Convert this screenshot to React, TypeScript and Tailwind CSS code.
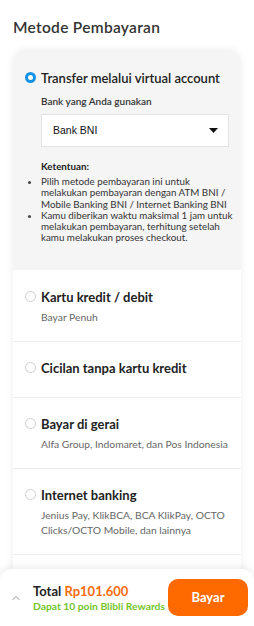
import { ChevronUp } from 'lucide-react';

const otherMethods = [
  { title: 'Kartu kredit / debit', desc: 'Bayar Penuh' },
  { title: 'Cicilan tanpa kartu kredit', desc: '' },
  { title: 'Bayar di gerai', desc: 'Alfa Group, Indomaret, dan Pos Indonesia' },
  {
    title: 'Internet banking',
    desc: 'Jenius Pay, KlikBCA, BCA KlikPay, OCTO Clicks/OCTO Mobile, dan lainnya',
  },
];

const terms = [
  ['Pilih metode pembayaran ini untuk', 'melakukan pembayaran dengan ATM BNI /', 'Mobile Banking BNI / Internet Banking BNI'],
  ['Kamu diberikan waktu maksimal 1 jam untuk', 'melakukan pembayaran, terhitung setelah', 'kamu melakukan proses checkout.'],
];

const Radio = ({ checked }: { checked?: boolean }) =>
  checked ? (
    <span className="mt-[1px] block h-[11px] w-[11px] shrink-0 rounded-full border-[3px] border-[#1592e6] bg-white" />
  ) : (
    <span className="mt-[1px] block h-[11px] w-[11px] shrink-0 rounded-full border border-[#cfcfcf] bg-white" />
  );

export default function App() {
  return (
    <div className="relative h-[626px] w-[254px] overflow-hidden bg-white font-['Lato',sans-serif] text-[#333]">
      <h1 className="px-[13px] pt-[17px] text-[15.5px] font-semibold leading-[20px] tracking-[0.3px] text-[#333]">
        Metode Pembayaran
      </h1>

      <div className="mx-[13px] mt-[13px] overflow-hidden rounded-t-[12px] shadow-[0_0_8px_rgba(0,0,0,0.07)]">
        {/* Selected method */}
        <div className="bg-[#f5f5f5] px-[12px] pb-[26px] pt-[21px]">
          <div className="flex items-start gap-[5px]">
            <Radio checked />
            <span className="text-[13px] font-semibold leading-[14px] text-[#222]">
              Transfer melalui virtual account
            </span>
          </div>
          <div className="pl-[16px]">
            <p className="mt-[10px] text-[10px] font-semibold leading-[12px] text-[#333]">
              Bank yang Anda gunakan
            </p>
            <div className="mt-[7px] flex h-[33px] items-center justify-between border border-[#e3e3e3] bg-white pl-[11px] pr-[10px]">
              <span className="font-['Liberation_Sans',sans-serif] text-[10.5px] text-[#111]">Bank BNI</span>
              <svg width="9" height="5" viewBox="0 0 9 5">
                <path d="M0 0h9L4.5 5z" fill="#111" />
              </svg>
            </div>
            <p className="mt-[13px] text-[9.8px] font-bold leading-[12px] text-[#222]">Ketentuan:</p>
          </div>
          <ul className="mt-[4px] list-disc pl-[16px] text-[9.8px] leading-[11.3px] text-[#333] marker:text-[#444]">
            {terms.map((lines) => (
              <li key={lines[0]} className="whitespace-nowrap">
                {lines.map((l, j) => (
                  <span key={l}>
                    {j > 0 && <br />}
                    {l}
                  </span>
                ))}
              </li>
            ))}
          </ul>
        </div>

        {/* Other methods */}
        {otherMethods.map((m, i) => (
          <div
            key={m.title}
            className={`bg-white px-[12px] pt-[19px] ${i === 0 ? 'border-t border-white' : 'border-t border-[#ececec]'} ${
              m.desc ? 'pb-[16px]' : 'pb-[22px]'
            }`}
          >
            <div className="flex items-start gap-[5px]">
              <Radio />
              <span className="text-[13px] font-bold leading-[14px] text-[#222]">{m.title}</span>
            </div>
            {m.desc && <p className="mt-[6px] pl-[16px] text-[10.3px] leading-[15px] text-[#666]">{m.desc}</p>}
          </div>
        ))}
        <div className="h-[80px] border-t border-[#ececec] bg-white" />
      </div>

      {/* Bottom bar */}
      <div className="absolute bottom-0 left-0 right-0 flex h-[57px] items-center rounded-t-[12px] bg-white pl-[10px] pr-[6px] shadow-[0_-2px_8px_rgba(0,0,0,0.08)]">
        <ChevronUp className="h-[12px] w-[12px] text-[#c2c2c2]" strokeWidth={2.5} />
        <div className="ml-[11px] flex-1">
          <p className="text-[13px] font-bold leading-[16px] text-[#222]">
            Total <span className="text-[#f96b0a]">Rp101.600</span>
          </p>
          <p className="mt-[1px] whitespace-nowrap text-[10.3px] font-bold leading-[12px] text-[#74c62a]">
            Dapat 10 poin Blibli Rewards
          </p>
        </div>
        <button className="h-[37px] w-[80px] shrink-0 rounded-[10px] bg-[#ff6a00] text-[13px] font-bold text-white">
          Bayar
        </button>
      </div>
    </div>
  );
}
